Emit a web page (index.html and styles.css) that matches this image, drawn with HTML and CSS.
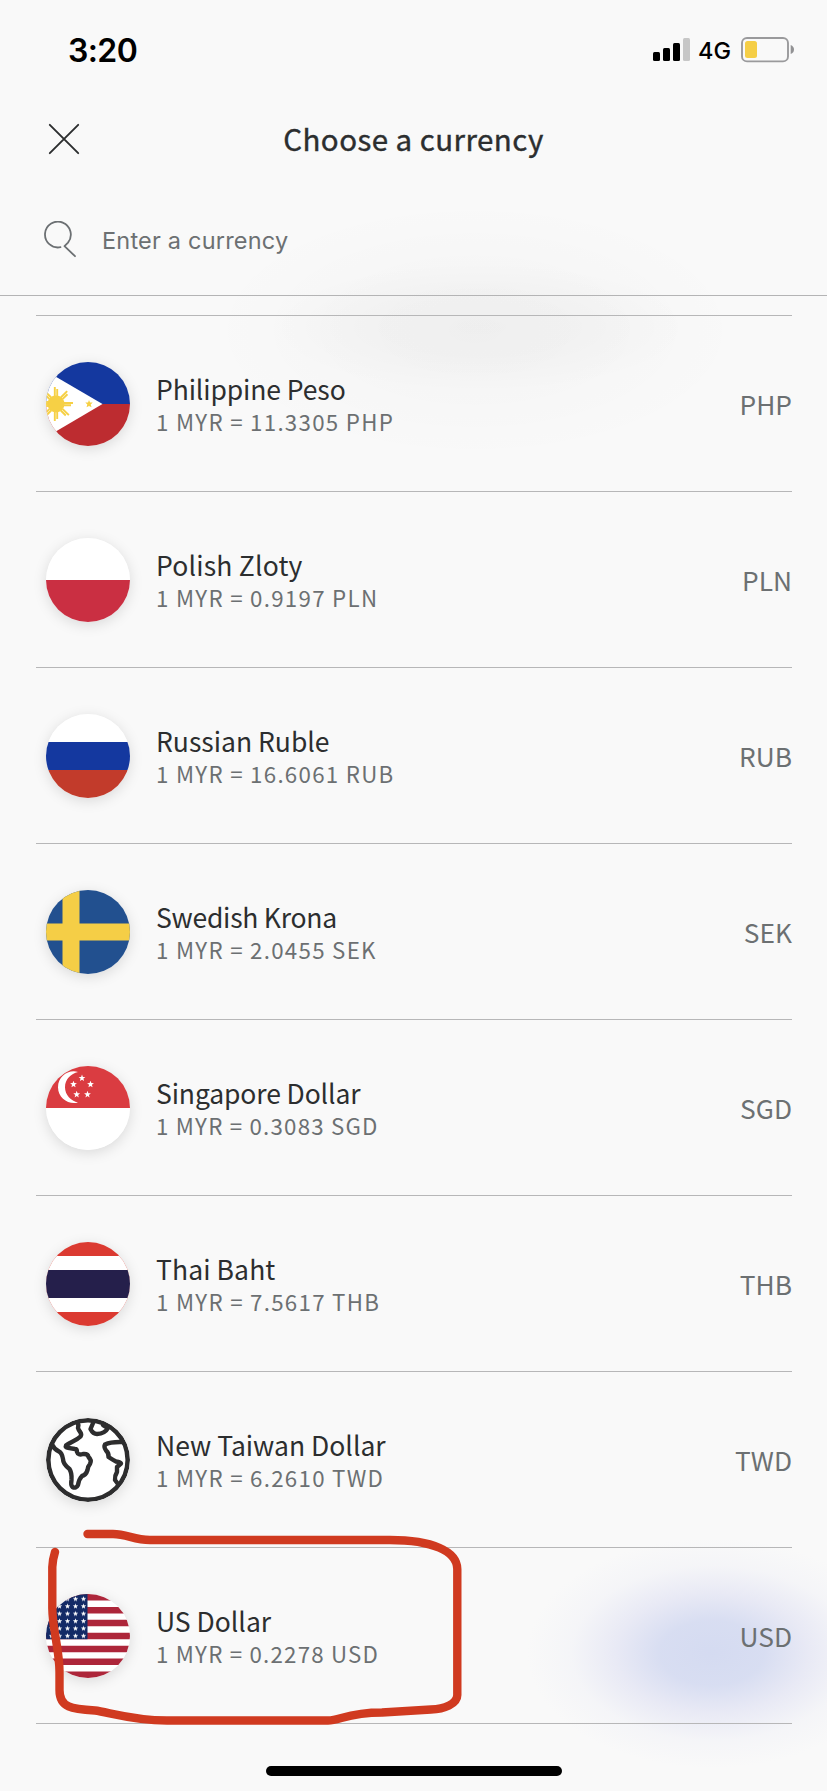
FILE: index.html
```html
<!DOCTYPE html>
<html lang="en">
<head>
<meta charset="utf-8">
<title>Choose a currency</title>
<link rel="stylesheet" href="styles.css">
</head>
<body>
<main class="screen">
  <div class="statusbar">
    <span class="time">3:20</span>
    <div class="status-right">
      <svg class="signal" width="37" height="24" viewBox="0 0 37 24">
        <rect x="0" y="14" width="7" height="9" rx="1.5"/><rect x="10" y="10" width="7" height="13" rx="1.5"/><rect x="20" y="5" width="7" height="18" rx="1.5"/><rect x="30" y="0" width="7" height="23" rx="1.5" fill="#c7c7c7"/>
      </svg>
      <span class="network">4G</span>
      <svg class="battery" width="54" height="26" viewBox="0 0 54 26">
        <rect x="1" y="1" width="46" height="23.4" rx="5" fill="none" stroke="#9a9a9c" stroke-width="1.9"/>
        <rect x="4" y="4" width="12" height="17" rx="2.5" fill="#f5ce46"/>
        <path d="M49.700 8v9Q53 15.500 53 12.500T49.700 8z" fill="#929294"/>
      </svg>
    </div>
  </div>
  <header class="titlebar">
    <svg class="close" width="32" height="32" viewBox="0 0 32 32"><path d="M1.800 1.800 30.200 30.200M30.200 1.800 1.800 30.200" stroke="#2c2e2f" stroke-width="1.9" stroke-linecap="round"/></svg>
    <h1 class="title">Choose a currency</h1>
  </header>
  <div class="search">
    <svg width="34" height="38" viewBox="0 0 34 38" fill="none" stroke="#6c7073" stroke-width="1.8" stroke-linecap="round" stroke-linejoin="round"><path d="M17.500 26.200A12.900 12.900 0 1 1 25 21.600L21.500 25.200 32 35.200"/></svg>
    <span class="placeholder">Enter a currency</span>
  </div>
  <ul class="list">
    <li class="row">
      <svg class="flag" viewBox="0 0 84 84">
        <rect width="84" height="42" fill="#14389f"/><rect y="42" width="84" height="42" fill="#bd2c30"/><path d="M-18 -1.500 56.500 42-18 86z" fill="#fff"/>
        <g fill="#f6d045"><circle cx="10" cy="42" r="8.500"/>
        <g stroke="#f6d045" stroke-width="1.900"><path d="M8.800 25v9M11.200 27v7M8.800 59v-9M11.200 57v-7M27 41h-9M25 43.200h-7M1 39v6"/><path d="M8.800 25v9M11.200 27v7M8.800 59v-9M11.200 57v-7" transform="rotate(45 10 42)"/><path d="M8.800 27v7M11.200 25v9M8.800 57v-7M11.200 59v-9" transform="rotate(-45 10 42)"/></g>
        <path d="M43 38l1.100 2.500 2.600.1-2 1.900.9 2.700-2.600-1.300-2.500 1.300.8-2.700-2-1.900 2.700-.1z"/></g>
      </svg>
      <div class="info"><span class="name n1">Philippine Peso</span><span class="rate">1 MYR = 11.3305 PHP</span></div>
      <span class="code">PHP</span>
    </li>
    <li class="row">
      <svg class="flag" viewBox="0 0 84 84"><rect width="84" height="42" fill="#fff"/><rect y="42" width="84" height="42" fill="#ca2f42"/></svg>
      <div class="info"><span class="name n2">Polish Zloty</span><span class="rate">1 MYR = 0.9197 PLN</span></div>
      <span class="code">PLN</span>
    </li>
    <li class="row">
      <svg class="flag" viewBox="0 0 84 84"><rect width="84" height="28" fill="#fff"/><rect y="28" width="84" height="28" fill="#14389f"/><rect y="56" width="84" height="28" fill="#c23b2b"/></svg>
      <div class="info"><span class="name">Russian Ruble</span><span class="rate">1 MYR = 16.6061 RUB</span></div>
      <span class="code">RUB</span>
    </li>
    <li class="row">
      <svg class="flag" viewBox="0 0 84 84"><rect width="84" height="84" fill="#22508f"/><path d="M16.500 0h17v84h-17zM0 33.500h84v17H0z" fill="#f5ce46"/></svg>
      <div class="info"><span class="name n4">Swedish Krona</span><span class="rate">1 MYR = 2.0455 SEK</span></div>
      <span class="code">SEK</span>
    </li>
    <li class="row">
      <svg class="flag" viewBox="0 0 84 84"><rect width="84" height="42" fill="#da3c41"/><rect y="42" width="84" height="42" fill="#fff"/>
        <g fill="#fff"><path d="M32 6C23 3 12 10 12 21.200S23 39 32 36.500C25 35 19 29 19 21.200S25 7.500 32 6z"/>
        <path id="star" d="M36 8.500l.9 2.400 2.500.1-2 1.600.7 2.500-2.100-1.400-2.100 1.400.7-2.500-2-1.600 2.500-.1z"/><use href="#star" x="-8.500" y="6.200"/><use href="#star" x="8.500" y="6.200"/><use href="#star" x="-5.300" y="16.300"/><use href="#star" x="5.500" y="16.300"/></g>
      </svg>
      <div class="info"><span class="name n5">Singapore Dollar</span><span class="rate r5">1 MYR = 0.3083 SGD</span></div>
      <span class="code">SGD</span>
    </li>
    <li class="row">
      <svg class="flag" viewBox="0 0 84 84"><rect width="84" height="84" fill="#db3a31"/><rect y="14" width="84" height="56" fill="#fff"/><rect y="28" width="84" height="28" fill="#251f4b"/></svg>
      <div class="info"><span class="name n6">Thai Baht</span><span class="rate">1 MYR = 7.5617 THB</span></div>
      <span class="code">THB</span>
    </li>
    <li class="row">
      <svg class="flag" viewBox="0 0 84 84"><circle cx="42" cy="42" r="39.700" fill="#fff" stroke="#2d2d2e" stroke-width="4.600"/>
        <g fill="none" stroke="#2d2d2e" stroke-width="4.400" stroke-linejoin="round" stroke-linecap="round">
          <path d="M31.500 4Q33 7 32 10C33 14 37 15 34.500 18.500 30 23 24 24 20 27.500Q19 29.500 22 29.800L29 31Q31 31 31 34 32 37.500 37 36 42 35.500 42.500 39 46 42 44 46 42 48 41.500 52 40 57 36 58 33 61 32 67 30 71 26.500 69Q24.500 67 25.500 62 26 55 23.500 51 17 46 17 41 16 35 13 33.500Q8 31 6 26.500"/>
          <path d="M47.500 4 44.500 11Q47 16 51 16 59 15.500 62 10L57 7"/>
          <path d="M77 24Q65 23.500 59 26.500 57.500 29 60 32.500 63 35 62.500 39 67 42 70 43.500 74.500 44 75 45.500L71 49 71 54Q68.500 58 69 62L72 66"/>
        </g>
      </svg>
      <div class="info"><span class="name">New Taiwan Dollar</span><span class="rate">1 MYR = 6.2610 TWD</span></div>
      <span class="code">TWD</span>
    </li>
    <li class="row">
      <svg class="flag" viewBox="0 0 84 84">
        <defs><pattern id="stars" x="0" y="1" width="8" height="7.400" patternUnits="userSpaceOnUse"><path d="M5.500 1.200l.7 1.800 1.900.1-1.500 1.200.5 1.900-1.600-1.100-1.600 1.100.5-1.900-1.500-1.200 1.900-.1z" fill="#fff"/></pattern></defs>
        <rect width="84" height="84" fill="#fff"/><path d="M0 3.200h84M0 16.200h84M0 29.100h84M0 42h84M0 54.900h84M0 67.800h84M0 80.800h84" stroke="#ad263a" stroke-width="6.460"/><rect width="41.500" height="45.200" fill="#132a66"/><rect width="41.500" height="45.200" fill="url(#stars)"/>
      </svg>
      <div class="info"><span class="name">US Dollar</span><span class="rate r5">1 MYR = 0.2278 USD</span></div>
      <span class="code">USD</span>
    </li>
  </ul>
  <div class="home"></div>
  <svg class="marker" width="420" height="210" viewBox="45 1525 420 210"><path d="M87.500 1534H113C127 1534 134 1540 150 1540H390C432 1540 457 1551 457.300 1569V1695C457.300 1704 444 1709 431 1709.500L382 1712.500C348 1712.500 340 1720.500 328 1720.500H167C133 1720.500 108 1712 95 1710.500 72 1709 59.500 1708 59.500 1690V1672C59.500 1650 52.500 1630 52.300 1608V1567Q52.500 1560 55 1552" fill="none" stroke="#d03a20" stroke-width="8.400" stroke-linecap="round" stroke-linejoin="round"/></svg>
</main>
</body>
</html>
```
FILE: styles.css
```css
* { box-sizing: border-box; }
body { margin: 0; background: #f9f9f9; font-family: "Noto Sans CJK SC", "Noto Sans", sans-serif; }
.screen {
  position: relative; width: 827px; height: 1791px; overflow: hidden;
  background:
    radial-gradient(ellipse 185px 115px at 712px 1653px, rgba(190,200,236,.62) 0, rgba(190,200,236,.56) 28%, rgba(203,206,238,.36) 52%, rgba(215,218,240,.13) 76%, transparent 100%),
    radial-gradient(ellipse 210px 65px at 480px 327px, rgba(0,0,0,.022), rgba(0,0,0,.018) 45%, transparent),
    radial-gradient(ellipse 270px 130px at 475px 330px, rgba(0,0,0,.018), rgba(0,0,0,.012) 50%, transparent),
    #f9f9f9;
}
.statusbar { height: 100px; padding: 0 32px 0 68px; display: flex; justify-content: space-between; align-items: center; }
.time { font: 600 32px/40px Inter, sans-serif; letter-spacing: -0.6px; color: #000; margin-top: 1px; }
.status-right { display: flex; align-items: center; }
.network { font: 500 23.500px/30px Inter, sans-serif; color: #000; margin: 2px 10px 0 8px; }
.titlebar { height: 78px; display: grid; grid-template-columns: 1fr auto 1fr; align-items: center; padding: 0 48px; }
.title { margin: 0 0 2px; font-weight: 400; font-size: 29.500px; line-height: 40px; letter-spacing: 0.450px; color: #2c2e2f; -webkit-text-stroke: 0.4px #2c2e2f; }
.search { height: 118px; border-bottom: 1px solid #b4b4b5; display: flex; align-items: center; padding: 0 0 0 43px; }
.search svg { margin-top: 7px; }
.placeholder { font: 400 23.500px/30px Inter, sans-serif; letter-spacing: 0.200px; color: #6c7072; margin: 9px 0 0 25px; }
.list { list-style: none; margin: 19px 35px 0 36px; padding: 0; border-top: 1px solid #b7b7b8; }
.row { height: 176px; border-bottom: 1px solid #b7b7b8; display: flex; align-items: center; padding-left: 10px; }
.flag { width: 84px; height: 84px; border-radius: 50%; box-shadow: 0 3px 14px rgba(0,0,0,.13); flex: none; }
.info { display: flex; flex-direction: column; margin: 2px 0 0 26px; flex: 1; align-items: flex-start; }
.name { font-size: 26.500px; line-height: 32px; color: #2c2e2f; white-space: nowrap; }
.n1 { letter-spacing: -0.1px; }
.n2 { letter-spacing: 0.2px; }
.n4 { letter-spacing: -0.240px; }
.n5 { letter-spacing: -0.120px; }
.n6 { letter-spacing: 0.1px; }
.rate { font-size: 22.300px; line-height: 32px; letter-spacing: 1.280px; color: #6c7072; white-space: nowrap; }
.r5 { letter-spacing: 1.210px; }
.code { font-size: 26.300px; line-height: 32px; color: #6c7072; margin: 1px 0 0 0; }
.home { width: 296px; height: 10px; border-radius: 5px; background: #000; margin: 42px auto 0; }
.marker { position: absolute; left: 45px; top: 1525px; }
```
